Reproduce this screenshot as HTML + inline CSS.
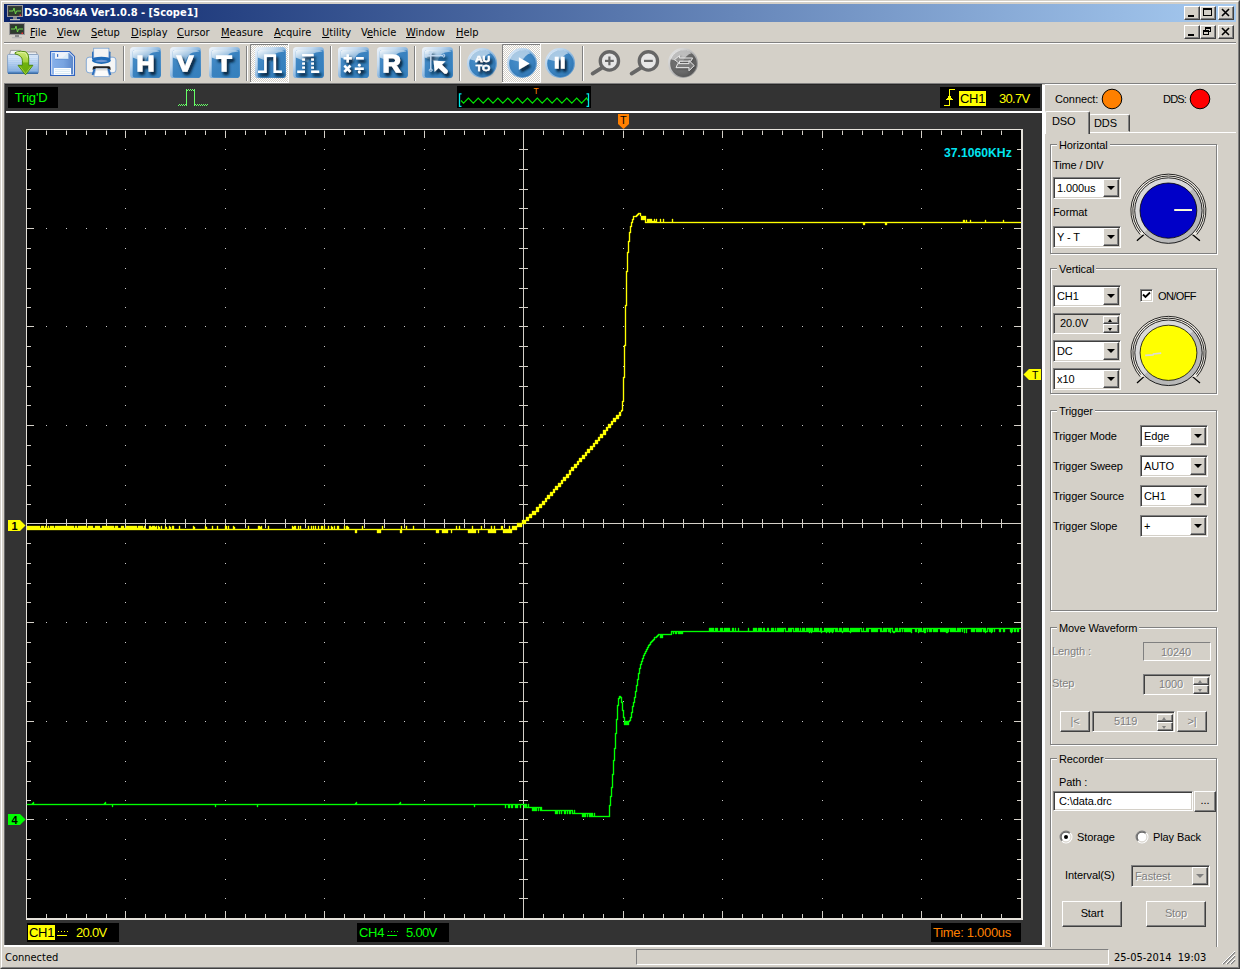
<!DOCTYPE html>
<html lang="en"><head><meta charset="utf-8"><title>DSO-3064A Ver1.0.8 - [Scope1]</title>
<style>
*{box-sizing:border-box;margin:0;padding:0}
html,body{width:1240px;height:969px;overflow:hidden;background:#d4d0c8}
body{position:relative;font-family:"Liberation Sans",sans-serif;font-size:11px;color:#000;line-height:1}
.a{position:absolute}
.t{position:absolute;white-space:nowrap;font-size:11px;line-height:14px;letter-spacing:-0.1px}
.tm{position:absolute;white-space:nowrap;font-family:"DejaVu Sans Condensed","DejaVu Sans","Liberation Sans",sans-serif;font-size:11px;line-height:14px}
.tm u{text-decoration:underline;text-underline-offset:1px}
.dis{color:#808080;text-shadow:1px 1px 0 #fff}
.btn{position:absolute;background:#d4d0c8;border:1px solid;border-color:#fff #404040 #404040 #fff;box-shadow:inset -1px -1px 0 #808080,inset 1px 1px 0 #d4d0c8}
.btn span{position:absolute;left:0;right:0;text-align:center;font-size:11px;letter-spacing:-0.1px}
.sunk{position:absolute;background:#fff;border:1px solid;border-color:#808080 #fff #fff #808080;box-shadow:inset 1px 1px 0 #404040,inset -1px -1px 0 #d4d0c8}
.sunk.g{background:#d4d0c8}
.cb{position:absolute;top:1px;right:1px;bottom:1px;width:16px;background:#d4d0c8;border:1px solid;border-color:#fff #404040 #404040 #fff;box-shadow:inset -1px -1px 0 #808080}
.cb:after{content:"";position:absolute;left:3px;top:6px;border:4px solid transparent;border-top:4px solid #000;border-bottom:0}
.cb.d:after{border-top-color:#808080}
.sunk span{position:absolute;left:3px;top:2.5px;font-size:11px;line-height:14px;letter-spacing:-0.1px;white-space:nowrap}
.grp{position:absolute;border:1px solid #808080;box-shadow:1px 1px 0 #fff,inset 1px 1px 0 #fff}
.grp>b{position:absolute;left:6px;top:-7px;background:#d4d0c8;padding:0 2px;font-weight:normal;font-size:11px;line-height:14px;letter-spacing:-0.1px;white-space:nowrap}
.sep{position:absolute;top:46px;width:2px;height:35px;border-left:1px solid #808080;border-right:1px solid #fff}
.sp{position:absolute;right:1px;width:16px;background:#d4d0c8;border:1px solid;border-color:#fff #404040 #404040 #fff;box-shadow:inset -1px -1px 0 #808080}
.sp:after{content:"";position:absolute;left:4px;top:2px;border:2.5px solid transparent}
.sp.u:after{border-bottom:3px solid #000;border-top:0}
.sp.dn:after{border-top:3px solid #000;border-bottom:0;top:3px}
.sp.gd:after{border-top-color:#808080;border-bottom-color:#808080}
</style></head>
<body>
<div class="a" style="left:0;top:0;width:1240px;height:969px;border:1px solid;border-color:#d4d0c8 #404040 #404040 #d4d0c8"></div>
<div class="a" style="left:1px;top:1px;width:1238px;height:967px;border:1px solid;border-color:#fff #808080 #808080 #fff"></div>
<div class="a" style="left:4px;top:4px;width:1232px;height:18px;background:linear-gradient(90deg,#0a246a 0%,#a6caf0 100%)"></div>
<svg class="a" style="left:7px;top:5px" width="16" height="16" viewBox="0 0 16 16"><rect x="0.5" y="0.5" width="15" height="11" fill="#3a3a3a" stroke="#9a9a9a"/><rect x="2" y="2" width="12" height="8" fill="#2c3c2c"/><path d="M2 6H6L7 3L8.5 9L9.5 6H14" stroke="#6fd24a" stroke-width="1" fill="none"/><rect x="12.5" y="9.5" width="1.5" height="1.5" fill="#e33"/><rect x="6" y="12" width="4" height="2" fill="#888"/><rect x="3" y="14" width="10" height="1.3" fill="#b8b8b8"/></svg>
<div class="tm" style="left:24px;top:6px;color:#fff;font-weight:bold;font-size:11px">DSO-3064A Ver1.0.8 - [Scope1]</div>
<div class="btn" style="left:1184px;top:6px;width:16px;height:14px"><svg class="a" style="left:-1px;top:-1px" width="14" height="12" viewBox="0 0 14 12"><rect x="4" y="9" width="6" height="2" fill="#000"/></svg></div>
<div class="btn" style="left:1200px;top:6px;width:16px;height:14px"><svg class="a" style="left:-1px;top:-1px" width="14" height="12" viewBox="0 0 14 12"><rect x="3.5" y="2.5" width="8" height="7" fill="none" stroke="#000"/><rect x="3" y="2" width="9" height="2" fill="#000"/></svg></div>
<div class="btn" style="left:1218px;top:6px;width:16px;height:14px"><svg class="a" style="left:-1px;top:-1px" width="14" height="12" viewBox="0 0 14 12"><path d="M4 3L11 10M11 3L4 10" stroke="#000" stroke-width="1.6"/></svg></div>
<div class="btn" style="left:1184px;top:25px;width:16px;height:14px"><svg class="a" style="left:-1px;top:-1px" width="14" height="12" viewBox="0 0 14 12"><rect x="4" y="9" width="6" height="2" fill="#000"/></svg></div>
<div class="btn" style="left:1200px;top:25px;width:16px;height:14px"><svg class="a" style="left:-1px;top:-1px" width="14" height="12" viewBox="0 0 14 12"><rect x="5.5" y="2.5" width="5" height="4" fill="none" stroke="#000"/><rect x="5" y="2" width="6" height="2" fill="#000"/><rect x="3.5" y="5.5" width="5" height="4" fill="#d4d0c8" stroke="#000"/><rect x="3" y="5" width="6" height="2" fill="#000"/></svg></div>
<div class="btn" style="left:1218px;top:25px;width:16px;height:14px"><svg class="a" style="left:-1px;top:-1px" width="14" height="12" viewBox="0 0 14 12"><path d="M4 3L11 10M11 3L4 10" stroke="#000" stroke-width="1.6"/></svg></div>
<svg class="a" style="left:9px;top:23px" width="16" height="16" viewBox="0 0 16 16"><rect x="0.5" y="0.5" width="15" height="11" fill="#3a3a3a" stroke="#9a9a9a"/><rect x="2" y="2" width="12" height="8" fill="#2c3c2c"/><path d="M2 6H6L7 3L8.5 9L9.5 6H14" stroke="#6fd24a" stroke-width="1" fill="none"/><rect x="12.5" y="9.5" width="1.5" height="1.5" fill="#e33"/><rect x="6" y="12" width="4" height="2" fill="#888"/><rect x="3" y="14" width="10" height="1.3" fill="#b8b8b8"/></svg>
<div class="tm" style="left:30px;top:26px"><u>F</u>ile</div>
<div class="tm" style="left:57px;top:26px"><u>V</u>iew</div>
<div class="tm" style="left:91px;top:26px"><u>S</u>etup</div>
<div class="tm" style="left:131px;top:26px"><u>D</u>isplay</div>
<div class="tm" style="left:177px;top:26px"><u>C</u>ursor</div>
<div class="tm" style="left:221px;top:26px"><u>M</u>easure</div>
<div class="tm" style="left:274px;top:26px"><u>A</u>cquire</div>
<div class="tm" style="left:322px;top:26px"><u>U</u>tility</div>
<div class="tm" style="left:361px;top:26px">V<u>e</u>hicle</div>
<div class="tm" style="left:406px;top:26px"><u>W</u>indow</div>
<div class="tm" style="left:456px;top:26px"><u>H</u>elp</div>
<div class="a" style="left:4px;top:42px;width:1232px;height:2px;border-top:1px solid #808080;border-bottom:1px solid #fff"></div>
<svg class="a" style="left:0;top:0" width="1240" height="969" viewBox="0 0 1240 969">
<g shape-rendering="crispEdges">
<rect x="4" y="84" width="1038" height="861" fill="#333"/>
<rect x="4" y="84" width="1038" height="1" fill="#262626"/><rect x="4" y="84" width="1" height="861" fill="#6a6a6a"/>
<rect x="6" y="111" width="1036" height="2" fill="#fff"/>
<rect x="1042" y="85" width="3" height="861" fill="#fff"/>
<rect x="4" y="945" width="1041" height="2" fill="#fff"/>
<rect x="8" y="87" width="50" height="21" fill="#000"/>
<rect x="457" y="86" width="134" height="22" fill="#000"/>
<rect x="940" y="87" width="100" height="21" fill="#000"/>
<rect x="26" y="129" width="997" height="791" fill="#e4e1da"/>
<rect x="27" y="130" width="994" height="788" fill="#000"/>
<path d="M46 131h1v4h-1zM46 914h1v4h-1zM46 519h1v9h-1zM66 131h1v4h-1zM66 914h1v4h-1zM66 519h1v9h-1zM86 131h1v4h-1zM86 914h1v4h-1zM86 519h1v9h-1zM106 131h1v4h-1zM106 914h1v4h-1zM106 519h1v9h-1zM125 131h1v7h-1zM125 911h1v7h-1zM125 519h1v9h-1zM145 131h1v4h-1zM145 914h1v4h-1zM145 519h1v9h-1zM165 131h1v4h-1zM165 914h1v4h-1zM165 519h1v9h-1zM185 131h1v4h-1zM185 914h1v4h-1zM185 519h1v9h-1zM205 131h1v4h-1zM205 914h1v4h-1zM205 519h1v9h-1zM225 131h1v7h-1zM225 911h1v7h-1zM225 519h1v9h-1zM245 131h1v4h-1zM245 914h1v4h-1zM245 519h1v9h-1zM265 131h1v4h-1zM265 914h1v4h-1zM265 519h1v9h-1zM285 131h1v4h-1zM285 914h1v4h-1zM285 519h1v9h-1zM305 131h1v4h-1zM305 914h1v4h-1zM305 519h1v9h-1zM324 131h1v7h-1zM324 911h1v7h-1zM324 519h1v9h-1zM344 131h1v4h-1zM344 914h1v4h-1zM344 519h1v9h-1zM364 131h1v4h-1zM364 914h1v4h-1zM364 519h1v9h-1zM384 131h1v4h-1zM384 914h1v4h-1zM384 519h1v9h-1zM404 131h1v4h-1zM404 914h1v4h-1zM404 519h1v9h-1zM424 131h1v7h-1zM424 911h1v7h-1zM424 519h1v9h-1zM444 131h1v4h-1zM444 914h1v4h-1zM444 519h1v9h-1zM464 131h1v4h-1zM464 914h1v4h-1zM464 519h1v9h-1zM484 131h1v4h-1zM484 914h1v4h-1zM484 519h1v9h-1zM504 131h1v4h-1zM504 914h1v4h-1zM504 519h1v9h-1zM523 131h1v7h-1zM523 911h1v7h-1zM543 131h1v4h-1zM543 914h1v4h-1zM543 519h1v9h-1zM563 131h1v4h-1zM563 914h1v4h-1zM563 519h1v9h-1zM583 131h1v4h-1zM583 914h1v4h-1zM583 519h1v9h-1zM603 131h1v4h-1zM603 914h1v4h-1zM603 519h1v9h-1zM623 131h1v7h-1zM623 911h1v7h-1zM623 519h1v9h-1zM643 131h1v4h-1zM643 914h1v4h-1zM643 519h1v9h-1zM663 131h1v4h-1zM663 914h1v4h-1zM663 519h1v9h-1zM683 131h1v4h-1zM683 914h1v4h-1zM683 519h1v9h-1zM703 131h1v4h-1zM703 914h1v4h-1zM703 519h1v9h-1zM722 131h1v7h-1zM722 911h1v7h-1zM722 519h1v9h-1zM742 131h1v4h-1zM742 914h1v4h-1zM742 519h1v9h-1zM762 131h1v4h-1zM762 914h1v4h-1zM762 519h1v9h-1zM782 131h1v4h-1zM782 914h1v4h-1zM782 519h1v9h-1zM802 131h1v4h-1zM802 914h1v4h-1zM802 519h1v9h-1zM822 131h1v7h-1zM822 911h1v7h-1zM822 519h1v9h-1zM842 131h1v4h-1zM842 914h1v4h-1zM842 519h1v9h-1zM862 131h1v4h-1zM862 914h1v4h-1zM862 519h1v9h-1zM882 131h1v4h-1zM882 914h1v4h-1zM882 519h1v9h-1zM902 131h1v4h-1zM902 914h1v4h-1zM902 519h1v9h-1zM921 131h1v7h-1zM921 911h1v7h-1zM921 519h1v9h-1zM941 131h1v4h-1zM941 914h1v4h-1zM941 519h1v9h-1zM961 131h1v4h-1zM961 914h1v4h-1zM961 519h1v9h-1zM981 131h1v4h-1zM981 914h1v4h-1zM981 519h1v9h-1zM1001 131h1v4h-1zM1001 914h1v4h-1zM1001 519h1v9h-1zM27 149h4v1h-4zM1017 149h4v1h-4zM519 149h9v1h-9zM27 169h4v1h-4zM1017 169h4v1h-4zM519 169h9v1h-9zM27 189h4v1h-4zM1017 189h4v1h-4zM519 189h9v1h-9zM27 208h4v1h-4zM1017 208h4v1h-4zM519 208h9v1h-9zM27 228h7v1h-7zM1014 228h7v1h-7zM519 228h9v1h-9zM27 248h4v1h-4zM1017 248h4v1h-4zM519 248h9v1h-9zM27 268h4v1h-4zM1017 268h4v1h-4zM519 268h9v1h-9zM27 288h4v1h-4zM1017 288h4v1h-4zM519 288h9v1h-9zM27 307h4v1h-4zM1017 307h4v1h-4zM519 307h9v1h-9zM27 326h7v1h-7zM1014 326h7v1h-7zM519 326h9v1h-9zM27 346h4v1h-4zM1017 346h4v1h-4zM519 346h9v1h-9zM27 366h4v1h-4zM1017 366h4v1h-4zM519 366h9v1h-9zM27 386h4v1h-4zM1017 386h4v1h-4zM519 386h9v1h-9zM27 405h4v1h-4zM1017 405h4v1h-4zM519 405h9v1h-9zM27 425h7v1h-7zM1014 425h7v1h-7zM519 425h9v1h-9zM27 445h4v1h-4zM1017 445h4v1h-4zM519 445h9v1h-9zM27 465h4v1h-4zM1017 465h4v1h-4zM519 465h9v1h-9zM27 485h4v1h-4zM1017 485h4v1h-4zM519 485h9v1h-9zM27 504h4v1h-4zM1017 504h4v1h-4zM519 504h9v1h-9zM27 523h7v1h-7zM1014 523h7v1h-7zM27 543h4v1h-4zM1017 543h4v1h-4zM519 543h9v1h-9zM27 563h4v1h-4zM1017 563h4v1h-4zM519 563h9v1h-9zM27 583h4v1h-4zM1017 583h4v1h-4zM519 583h9v1h-9zM27 602h4v1h-4zM1017 602h4v1h-4zM519 602h9v1h-9zM27 622h7v1h-7zM1014 622h7v1h-7zM519 622h9v1h-9zM27 642h4v1h-4zM1017 642h4v1h-4zM519 642h9v1h-9zM27 662h4v1h-4zM1017 662h4v1h-4zM519 662h9v1h-9zM27 682h4v1h-4zM1017 682h4v1h-4zM519 682h9v1h-9zM27 701h4v1h-4zM1017 701h4v1h-4zM519 701h9v1h-9zM27 721h7v1h-7zM1014 721h7v1h-7zM519 721h9v1h-9zM27 741h4v1h-4zM1017 741h4v1h-4zM519 741h9v1h-9zM27 761h4v1h-4zM1017 761h4v1h-4zM519 761h9v1h-9zM27 781h4v1h-4zM1017 781h4v1h-4zM519 781h9v1h-9zM27 800h4v1h-4zM1017 800h4v1h-4zM519 800h9v1h-9zM27 819h7v1h-7zM1014 819h7v1h-7zM519 819h9v1h-9zM27 839h4v1h-4zM1017 839h4v1h-4zM519 839h9v1h-9zM27 859h4v1h-4zM1017 859h4v1h-4zM519 859h9v1h-9zM27 879h4v1h-4zM1017 879h4v1h-4zM519 879h9v1h-9zM27 898h4v1h-4zM1017 898h4v1h-4zM519 898h9v1h-9zM523 130h1v788h-1zM27 523h994v1h-994z" fill="#d4d0c8"/>
<path d="M46 130h1v1h-1zM66 130h1v1h-1zM86 130h1v1h-1zM106 130h1v1h-1zM125 130h1v1h-1zM145 130h1v1h-1zM165 130h1v1h-1zM185 130h1v1h-1zM205 130h1v1h-1zM225 130h1v1h-1zM245 130h1v1h-1zM265 130h1v1h-1zM285 130h1v1h-1zM305 130h1v1h-1zM324 130h1v1h-1zM344 130h1v1h-1zM364 130h1v1h-1zM384 130h1v1h-1zM404 130h1v1h-1zM424 130h1v1h-1zM444 130h1v1h-1zM464 130h1v1h-1zM484 130h1v1h-1zM504 130h1v1h-1zM523 130h1v1h-1zM543 130h1v1h-1zM563 130h1v1h-1zM583 130h1v1h-1zM603 130h1v1h-1zM623 130h1v1h-1zM643 130h1v1h-1zM663 130h1v1h-1zM683 130h1v1h-1zM703 130h1v1h-1zM722 130h1v1h-1zM742 130h1v1h-1zM762 130h1v1h-1zM782 130h1v1h-1zM802 130h1v1h-1zM822 130h1v1h-1zM842 130h1v1h-1zM862 130h1v1h-1zM882 130h1v1h-1zM902 130h1v1h-1zM921 130h1v1h-1zM941 130h1v1h-1zM961 130h1v1h-1zM981 130h1v1h-1zM1001 130h1v1h-1z" fill="#d4d0c8" fill-opacity="0.4"/>
<path d="M125 149h1v1h-1zM125 169h1v1h-1zM125 189h1v1h-1zM125 208h1v1h-1zM125 228h1v1h-1zM125 248h1v1h-1zM125 268h1v1h-1zM125 288h1v1h-1zM125 307h1v1h-1zM125 326h1v1h-1zM125 346h1v1h-1zM125 366h1v1h-1zM125 386h1v1h-1zM125 405h1v1h-1zM125 425h1v1h-1zM125 445h1v1h-1zM125 465h1v1h-1zM125 485h1v1h-1zM125 504h1v1h-1zM125 523h1v1h-1zM125 543h1v1h-1zM125 563h1v1h-1zM125 583h1v1h-1zM125 602h1v1h-1zM125 622h1v1h-1zM125 642h1v1h-1zM125 662h1v1h-1zM125 682h1v1h-1zM125 701h1v1h-1zM125 721h1v1h-1zM125 741h1v1h-1zM125 761h1v1h-1zM125 781h1v1h-1zM125 800h1v1h-1zM125 819h1v1h-1zM125 839h1v1h-1zM125 859h1v1h-1zM125 879h1v1h-1zM125 898h1v1h-1zM225 149h1v1h-1zM225 169h1v1h-1zM225 189h1v1h-1zM225 208h1v1h-1zM225 228h1v1h-1zM225 248h1v1h-1zM225 268h1v1h-1zM225 288h1v1h-1zM225 307h1v1h-1zM225 326h1v1h-1zM225 346h1v1h-1zM225 366h1v1h-1zM225 386h1v1h-1zM225 405h1v1h-1zM225 425h1v1h-1zM225 445h1v1h-1zM225 465h1v1h-1zM225 485h1v1h-1zM225 504h1v1h-1zM225 523h1v1h-1zM225 543h1v1h-1zM225 563h1v1h-1zM225 583h1v1h-1zM225 602h1v1h-1zM225 622h1v1h-1zM225 642h1v1h-1zM225 662h1v1h-1zM225 682h1v1h-1zM225 701h1v1h-1zM225 721h1v1h-1zM225 741h1v1h-1zM225 761h1v1h-1zM225 781h1v1h-1zM225 800h1v1h-1zM225 819h1v1h-1zM225 839h1v1h-1zM225 859h1v1h-1zM225 879h1v1h-1zM225 898h1v1h-1zM324 149h1v1h-1zM324 169h1v1h-1zM324 189h1v1h-1zM324 208h1v1h-1zM324 228h1v1h-1zM324 248h1v1h-1zM324 268h1v1h-1zM324 288h1v1h-1zM324 307h1v1h-1zM324 326h1v1h-1zM324 346h1v1h-1zM324 366h1v1h-1zM324 386h1v1h-1zM324 405h1v1h-1zM324 425h1v1h-1zM324 445h1v1h-1zM324 465h1v1h-1zM324 485h1v1h-1zM324 504h1v1h-1zM324 523h1v1h-1zM324 543h1v1h-1zM324 563h1v1h-1zM324 583h1v1h-1zM324 602h1v1h-1zM324 622h1v1h-1zM324 642h1v1h-1zM324 662h1v1h-1zM324 682h1v1h-1zM324 701h1v1h-1zM324 721h1v1h-1zM324 741h1v1h-1zM324 761h1v1h-1zM324 781h1v1h-1zM324 800h1v1h-1zM324 819h1v1h-1zM324 839h1v1h-1zM324 859h1v1h-1zM324 879h1v1h-1zM324 898h1v1h-1zM424 149h1v1h-1zM424 169h1v1h-1zM424 189h1v1h-1zM424 208h1v1h-1zM424 228h1v1h-1zM424 248h1v1h-1zM424 268h1v1h-1zM424 288h1v1h-1zM424 307h1v1h-1zM424 326h1v1h-1zM424 346h1v1h-1zM424 366h1v1h-1zM424 386h1v1h-1zM424 405h1v1h-1zM424 425h1v1h-1zM424 445h1v1h-1zM424 465h1v1h-1zM424 485h1v1h-1zM424 504h1v1h-1zM424 523h1v1h-1zM424 543h1v1h-1zM424 563h1v1h-1zM424 583h1v1h-1zM424 602h1v1h-1zM424 622h1v1h-1zM424 642h1v1h-1zM424 662h1v1h-1zM424 682h1v1h-1zM424 701h1v1h-1zM424 721h1v1h-1zM424 741h1v1h-1zM424 761h1v1h-1zM424 781h1v1h-1zM424 800h1v1h-1zM424 819h1v1h-1zM424 839h1v1h-1zM424 859h1v1h-1zM424 879h1v1h-1zM424 898h1v1h-1zM623 149h1v1h-1zM623 169h1v1h-1zM623 189h1v1h-1zM623 208h1v1h-1zM623 228h1v1h-1zM623 248h1v1h-1zM623 268h1v1h-1zM623 288h1v1h-1zM623 307h1v1h-1zM623 326h1v1h-1zM623 346h1v1h-1zM623 366h1v1h-1zM623 386h1v1h-1zM623 405h1v1h-1zM623 425h1v1h-1zM623 445h1v1h-1zM623 465h1v1h-1zM623 485h1v1h-1zM623 504h1v1h-1zM623 523h1v1h-1zM623 543h1v1h-1zM623 563h1v1h-1zM623 583h1v1h-1zM623 602h1v1h-1zM623 622h1v1h-1zM623 642h1v1h-1zM623 662h1v1h-1zM623 682h1v1h-1zM623 701h1v1h-1zM623 721h1v1h-1zM623 741h1v1h-1zM623 761h1v1h-1zM623 781h1v1h-1zM623 800h1v1h-1zM623 819h1v1h-1zM623 839h1v1h-1zM623 859h1v1h-1zM623 879h1v1h-1zM623 898h1v1h-1zM722 149h1v1h-1zM722 169h1v1h-1zM722 189h1v1h-1zM722 208h1v1h-1zM722 228h1v1h-1zM722 248h1v1h-1zM722 268h1v1h-1zM722 288h1v1h-1zM722 307h1v1h-1zM722 326h1v1h-1zM722 346h1v1h-1zM722 366h1v1h-1zM722 386h1v1h-1zM722 405h1v1h-1zM722 425h1v1h-1zM722 445h1v1h-1zM722 465h1v1h-1zM722 485h1v1h-1zM722 504h1v1h-1zM722 523h1v1h-1zM722 543h1v1h-1zM722 563h1v1h-1zM722 583h1v1h-1zM722 602h1v1h-1zM722 622h1v1h-1zM722 642h1v1h-1zM722 662h1v1h-1zM722 682h1v1h-1zM722 701h1v1h-1zM722 721h1v1h-1zM722 741h1v1h-1zM722 761h1v1h-1zM722 781h1v1h-1zM722 800h1v1h-1zM722 819h1v1h-1zM722 839h1v1h-1zM722 859h1v1h-1zM722 879h1v1h-1zM722 898h1v1h-1zM822 149h1v1h-1zM822 169h1v1h-1zM822 189h1v1h-1zM822 208h1v1h-1zM822 228h1v1h-1zM822 248h1v1h-1zM822 268h1v1h-1zM822 288h1v1h-1zM822 307h1v1h-1zM822 326h1v1h-1zM822 346h1v1h-1zM822 366h1v1h-1zM822 386h1v1h-1zM822 405h1v1h-1zM822 425h1v1h-1zM822 445h1v1h-1zM822 465h1v1h-1zM822 485h1v1h-1zM822 504h1v1h-1zM822 523h1v1h-1zM822 543h1v1h-1zM822 563h1v1h-1zM822 583h1v1h-1zM822 602h1v1h-1zM822 622h1v1h-1zM822 642h1v1h-1zM822 662h1v1h-1zM822 682h1v1h-1zM822 701h1v1h-1zM822 721h1v1h-1zM822 741h1v1h-1zM822 761h1v1h-1zM822 781h1v1h-1zM822 800h1v1h-1zM822 819h1v1h-1zM822 839h1v1h-1zM822 859h1v1h-1zM822 879h1v1h-1zM822 898h1v1h-1zM921 149h1v1h-1zM921 169h1v1h-1zM921 189h1v1h-1zM921 208h1v1h-1zM921 228h1v1h-1zM921 248h1v1h-1zM921 268h1v1h-1zM921 288h1v1h-1zM921 307h1v1h-1zM921 326h1v1h-1zM921 346h1v1h-1zM921 366h1v1h-1zM921 386h1v1h-1zM921 405h1v1h-1zM921 425h1v1h-1zM921 445h1v1h-1zM921 465h1v1h-1zM921 485h1v1h-1zM921 504h1v1h-1zM921 523h1v1h-1zM921 543h1v1h-1zM921 563h1v1h-1zM921 583h1v1h-1zM921 602h1v1h-1zM921 622h1v1h-1zM921 642h1v1h-1zM921 662h1v1h-1zM921 682h1v1h-1zM921 701h1v1h-1zM921 721h1v1h-1zM921 741h1v1h-1zM921 761h1v1h-1zM921 781h1v1h-1zM921 800h1v1h-1zM921 819h1v1h-1zM921 839h1v1h-1zM921 859h1v1h-1zM921 879h1v1h-1zM921 898h1v1h-1zM46 228h1v1h-1zM66 228h1v1h-1zM86 228h1v1h-1zM106 228h1v1h-1zM145 228h1v1h-1zM165 228h1v1h-1zM185 228h1v1h-1zM205 228h1v1h-1zM245 228h1v1h-1zM265 228h1v1h-1zM285 228h1v1h-1zM305 228h1v1h-1zM344 228h1v1h-1zM364 228h1v1h-1zM384 228h1v1h-1zM404 228h1v1h-1zM444 228h1v1h-1zM464 228h1v1h-1zM484 228h1v1h-1zM504 228h1v1h-1zM543 228h1v1h-1zM563 228h1v1h-1zM583 228h1v1h-1zM603 228h1v1h-1zM643 228h1v1h-1zM663 228h1v1h-1zM683 228h1v1h-1zM703 228h1v1h-1zM742 228h1v1h-1zM762 228h1v1h-1zM782 228h1v1h-1zM802 228h1v1h-1zM842 228h1v1h-1zM862 228h1v1h-1zM882 228h1v1h-1zM902 228h1v1h-1zM941 228h1v1h-1zM961 228h1v1h-1zM981 228h1v1h-1zM1001 228h1v1h-1zM46 326h1v1h-1zM66 326h1v1h-1zM86 326h1v1h-1zM106 326h1v1h-1zM145 326h1v1h-1zM165 326h1v1h-1zM185 326h1v1h-1zM205 326h1v1h-1zM245 326h1v1h-1zM265 326h1v1h-1zM285 326h1v1h-1zM305 326h1v1h-1zM344 326h1v1h-1zM364 326h1v1h-1zM384 326h1v1h-1zM404 326h1v1h-1zM444 326h1v1h-1zM464 326h1v1h-1zM484 326h1v1h-1zM504 326h1v1h-1zM543 326h1v1h-1zM563 326h1v1h-1zM583 326h1v1h-1zM603 326h1v1h-1zM643 326h1v1h-1zM663 326h1v1h-1zM683 326h1v1h-1zM703 326h1v1h-1zM742 326h1v1h-1zM762 326h1v1h-1zM782 326h1v1h-1zM802 326h1v1h-1zM842 326h1v1h-1zM862 326h1v1h-1zM882 326h1v1h-1zM902 326h1v1h-1zM941 326h1v1h-1zM961 326h1v1h-1zM981 326h1v1h-1zM1001 326h1v1h-1zM46 425h1v1h-1zM66 425h1v1h-1zM86 425h1v1h-1zM106 425h1v1h-1zM145 425h1v1h-1zM165 425h1v1h-1zM185 425h1v1h-1zM205 425h1v1h-1zM245 425h1v1h-1zM265 425h1v1h-1zM285 425h1v1h-1zM305 425h1v1h-1zM344 425h1v1h-1zM364 425h1v1h-1zM384 425h1v1h-1zM404 425h1v1h-1zM444 425h1v1h-1zM464 425h1v1h-1zM484 425h1v1h-1zM504 425h1v1h-1zM543 425h1v1h-1zM563 425h1v1h-1zM583 425h1v1h-1zM603 425h1v1h-1zM643 425h1v1h-1zM663 425h1v1h-1zM683 425h1v1h-1zM703 425h1v1h-1zM742 425h1v1h-1zM762 425h1v1h-1zM782 425h1v1h-1zM802 425h1v1h-1zM842 425h1v1h-1zM862 425h1v1h-1zM882 425h1v1h-1zM902 425h1v1h-1zM941 425h1v1h-1zM961 425h1v1h-1zM981 425h1v1h-1zM1001 425h1v1h-1zM46 622h1v1h-1zM66 622h1v1h-1zM86 622h1v1h-1zM106 622h1v1h-1zM145 622h1v1h-1zM165 622h1v1h-1zM185 622h1v1h-1zM205 622h1v1h-1zM245 622h1v1h-1zM265 622h1v1h-1zM285 622h1v1h-1zM305 622h1v1h-1zM344 622h1v1h-1zM364 622h1v1h-1zM384 622h1v1h-1zM404 622h1v1h-1zM444 622h1v1h-1zM464 622h1v1h-1zM484 622h1v1h-1zM504 622h1v1h-1zM543 622h1v1h-1zM563 622h1v1h-1zM583 622h1v1h-1zM603 622h1v1h-1zM643 622h1v1h-1zM663 622h1v1h-1zM683 622h1v1h-1zM703 622h1v1h-1zM742 622h1v1h-1zM762 622h1v1h-1zM782 622h1v1h-1zM802 622h1v1h-1zM842 622h1v1h-1zM862 622h1v1h-1zM882 622h1v1h-1zM902 622h1v1h-1zM941 622h1v1h-1zM961 622h1v1h-1zM981 622h1v1h-1zM1001 622h1v1h-1zM46 721h1v1h-1zM66 721h1v1h-1zM86 721h1v1h-1zM106 721h1v1h-1zM145 721h1v1h-1zM165 721h1v1h-1zM185 721h1v1h-1zM205 721h1v1h-1zM245 721h1v1h-1zM265 721h1v1h-1zM285 721h1v1h-1zM305 721h1v1h-1zM344 721h1v1h-1zM364 721h1v1h-1zM384 721h1v1h-1zM404 721h1v1h-1zM444 721h1v1h-1zM464 721h1v1h-1zM484 721h1v1h-1zM504 721h1v1h-1zM543 721h1v1h-1zM563 721h1v1h-1zM583 721h1v1h-1zM603 721h1v1h-1zM643 721h1v1h-1zM663 721h1v1h-1zM683 721h1v1h-1zM703 721h1v1h-1zM742 721h1v1h-1zM762 721h1v1h-1zM782 721h1v1h-1zM802 721h1v1h-1zM842 721h1v1h-1zM862 721h1v1h-1zM882 721h1v1h-1zM902 721h1v1h-1zM941 721h1v1h-1zM961 721h1v1h-1zM981 721h1v1h-1zM1001 721h1v1h-1zM46 819h1v1h-1zM66 819h1v1h-1zM86 819h1v1h-1zM106 819h1v1h-1zM145 819h1v1h-1zM165 819h1v1h-1zM185 819h1v1h-1zM205 819h1v1h-1zM245 819h1v1h-1zM265 819h1v1h-1zM285 819h1v1h-1zM305 819h1v1h-1zM344 819h1v1h-1zM364 819h1v1h-1zM384 819h1v1h-1zM404 819h1v1h-1zM444 819h1v1h-1zM464 819h1v1h-1zM484 819h1v1h-1zM504 819h1v1h-1zM543 819h1v1h-1zM563 819h1v1h-1zM583 819h1v1h-1zM603 819h1v1h-1zM643 819h1v1h-1zM663 819h1v1h-1zM683 819h1v1h-1zM703 819h1v1h-1zM742 819h1v1h-1zM762 819h1v1h-1zM782 819h1v1h-1zM802 819h1v1h-1zM842 819h1v1h-1zM862 819h1v1h-1zM882 819h1v1h-1zM902 819h1v1h-1zM941 819h1v1h-1zM961 819h1v1h-1zM981 819h1v1h-1zM1001 819h1v1h-1z" fill="#c8c8c8"/>
</g><path d="M27 526h13v4h-13zM40 528h1v2h-1zM41 526h3v4h-3zM44 528h1v2h-1zM45 526h2v4h-2zM47 528h1v2h-1zM48 526h1v4h-1zM49 528h1v2h-1zM50 526h4v4h-4zM54 528h1v2h-1zM55 526h19v4h-19zM74 528h1v2h-1zM75 526h2v4h-2zM77 528h1v2h-1zM78 526h9v4h-9zM87 528h1v2h-1zM88 526h5v4h-5zM93 528h2v2h-2zM95 526h5v4h-5zM100 528h2v2h-2zM102 526h12v4h-12zM114 528h1v2h-1zM115 526h3v4h-3zM118 528h3v2h-3zM121 526h3v4h-3zM124 528h2v2h-2zM126 526h11v4h-11zM137 528h1v2h-1zM138 526h5v4h-5zM143 528h1v2h-1zM144 526h1v4h-1zM145 528h1v2h-1zM146 529h3v1h-3zM149 526h2v4h-2zM151 527h1v3h-1zM152 526h3v4h-3zM155 527h1v3h-1zM156 526h1v4h-1zM157 529h1v1h-1zM158 526h1v4h-1zM159 527h1v3h-1zM160 529h1v1h-1zM161 526h1v4h-1zM162 529h3v1h-3zM165 526h1v4h-1zM166 527h1v3h-1zM167 529h2v1h-2zM169 526h1v4h-1zM170 527h1v3h-1zM171 529h1v1h-1zM172 526h2v4h-2zM174 529h5v1h-5zM179 526h1v4h-1zM180 529h13v1h-13zM193 526h1v4h-1zM194 527h1v3h-1zM195 529h10v1h-10zM205 526h1v4h-1zM206 527h1v3h-1zM207 529h5v1h-5zM212 526h1v4h-1zM213 529h4v1h-4zM217 526h1v4h-1zM218 529h7v1h-7zM225 526h2v4h-2zM227 529h1v1h-1zM228 526h1v4h-1zM229 529h4v1h-4zM233 526h1v4h-1zM234 527h1v3h-1zM235 529h13v1h-13zM248 526h1v4h-1zM249 529h9v1h-9zM258 526h2v4h-2zM260 527h1v3h-1zM261 526h1v4h-1zM262 529h6v1h-6zM268 526h1v4h-1zM269 529h23v1h-23zM292 526h1v4h-1zM293 527h1v3h-1zM294 526h2v4h-2zM296 529h2v1h-2zM298 526h1v4h-1zM299 529h1v1h-1zM300 526h1v4h-1zM301 529h7v1h-7zM308 526h1v4h-1zM309 529h2v1h-2zM311 526h1v4h-1zM312 529h1v1h-1zM313 526h1v4h-1zM314 529h1v1h-1zM315 526h1v4h-1zM316 529h2v1h-2zM318 526h1v4h-1zM319 529h2v1h-2zM321 526h2v4h-2zM323 529h1v1h-1zM324 526h1v4h-1zM325 529h3v1h-3zM328 526h1v4h-1zM329 529h2v1h-2zM331 526h1v4h-1zM332 527h1v3h-1zM333 529h1v1h-1zM334 526h1v4h-1zM335 529h2v1h-2zM337 526h2v4h-2zM339 529h5v1h-5zM344 526h1v4h-1zM345 529h1v1h-1zM346 526h2v4h-2zM348 527h1v3h-1zM349 529h6v1h-6zM355 529h2v4h-2zM357 529h5v1h-5zM362 526h1v4h-1zM363 529h14v1h-14zM377 529h4v4h-4zM381 529h1v1h-1zM382 526h1v4h-1zM383 529h17v1h-17zM400 529h1v4h-1zM401 526h1v7h-1zM402 529h4v1h-4zM406 526h1v4h-1zM407 529h6v1h-6zM413 526h1v4h-1zM414 529h22v1h-22zM436 529h3v4h-3zM439 529h3v1h-3zM442 529h6v4h-6zM448 529h3v1h-3zM451 529h1v4h-1zM452 529h4v1h-4zM456 526h1v4h-1zM457 529h2v1h-2zM459 526h1v4h-1zM460 529h8v1h-8zM468 529h4v4h-4zM472 526h1v7h-1zM473 529h3v4h-3zM476 529h2v1h-2zM478 529h1v4h-1zM479 529h2v1h-2zM481 526h1v4h-1zM482 529h6v1h-6zM488 529h3v4h-3zM491 526h1v7h-1zM492 529h2v4h-2zM494 526h1v7h-1zM495 529h1v4h-1zM496 529h5v1h-5zM501 526h2v4h-2zM503 529h6v4h-6zM509 526h1v7h-1zM510 529h2v4h-2zM512 526h5v4h-5zM517 523h5v4h-5zM522 520h4v4h-4zM526 517h3v4h-3zM529 514h3v4h-3zM532 511h4v4h-4zM536 507h3v5h-3zM539 504h3v4h-3zM542 501h3v4h-3zM545 498h2v4h-2zM547 495h3v4h-3zM550 492h3v4h-3zM553 489h2v4h-2zM555 486h3v4h-3zM558 483h3v4h-3zM561 480h2v4h-2zM563 477h3v4h-3zM566 474h3v4h-3zM569 470h2v5h-2zM571 467h3v4h-3zM574 464h3v4h-3zM577 461h2v4h-2zM579 458h3v4h-3zM582 455h3v4h-3zM585 452h2v4h-2zM587 449h3v4h-3zM590 446h3v4h-3zM593 443h2v4h-2zM595 440h3v4h-3zM598 437h2v4h-2zM600 434h3v4h-3zM603 430h3v5h-3zM606 427h2v4h-2zM608 424h3v4h-3zM611 421h2v4h-2zM613 418h3v4h-3zM616 415h3v4h-3zM619 412h2v4h-2zM621 410h1v2h-1zM622 401h1v10h-1zM623 377h1v25h-1zM624 345h1v33h-1zM625 305h1v41h-1zM626 271h1v35h-1zM627 252h1v20h-1zM628 241h1v12h-1zM629 232h1v10h-1zM630 226h1v7h-1zM631 222h1v5h-1zM632 219h1v4h-1zM633 216h1v4h-1zM634 216h2v1h-2zM636 215h1v2h-1zM637 214h1v2h-1zM638 213h1v2h-1zM639 213h1v1h-1zM640 213h1v3h-1zM641 216h4v4h-4zM645 216h1v7h-1zM646 222h1v1h-1zM647 219h5v4h-5zM652 221h2v2h-2zM654 219h1v4h-1zM655 221h1v2h-1zM656 219h1v4h-1zM657 222h3v1h-3zM660 219h1v4h-1zM661 222h2v1h-2zM663 219h1v4h-1zM664 222h8v1h-8zM672 219h1v4h-1zM673 222h190v1h-190zM863 222h2v3h-2zM865 222h20v1h-20zM885 222h2v3h-2zM887 222h76v1h-76zM963 220h2v3h-2zM965 222h1v1h-1zM966 220h1v3h-1zM967 222h3v1h-3zM970 220h1v3h-1zM971 222h14v1h-14zM985 220h1v3h-1zM986 222h17v1h-17zM1003 220h1v3h-1zM1004 222h17v1h-17z" fill="#ffff00" stroke="#ffff00" stroke-width="0.35"/>
<path d="M27 804h5v1h-5zM32 803h1v2h-1zM33 802h1v3h-1zM34 804h70v1h-70zM104 803h1v2h-1zM105 802h1v3h-1zM106 804h6v1h-6zM112 804h1v3h-1zM113 804h102v1h-102zM215 804h1v3h-1zM216 804h41v1h-41zM257 804h1v3h-1zM258 804h97v1h-97zM355 803h1v2h-1zM356 802h1v3h-1zM357 804h42v1h-42zM399 803h1v2h-1zM400 802h1v3h-1zM401 804h73v1h-73zM474 804h1v3h-1zM475 804h30v1h-30zM505 804h1v4h-1zM506 804h2v1h-2zM508 804h2v4h-2zM510 804h1v1h-1zM511 804h2v4h-2zM513 804h2v1h-2zM515 804h3v4h-3zM518 804h2v1h-2zM520 804h1v4h-1zM521 804h3v1h-3zM524 804h3v4h-3zM527 807h1v1h-1zM528 804h1v4h-1zM529 807h3v1h-3zM532 807h5v4h-5zM537 807h1v1h-1zM538 807h1v4h-1zM539 807h1v1h-1zM540 807h2v4h-2zM542 810h13v1h-13zM555 810h3v4h-3zM558 810h1v1h-1zM559 810h1v4h-1zM560 810h1v1h-1zM561 810h1v4h-1zM562 810h2v1h-2zM564 810h2v4h-2zM566 810h1v1h-1zM567 810h1v4h-1zM568 810h1v1h-1zM569 810h2v4h-2zM571 810h1v1h-1zM572 810h1v4h-1zM573 813h1v1h-1zM574 810h1v4h-1zM575 813h7v1h-7zM582 813h4v4h-4zM586 813h1v1h-1zM587 813h1v4h-1zM588 813h1v1h-1zM589 813h4v4h-4zM593 816h1v1h-1zM594 813h1v4h-1zM595 816h14v1h-14zM609 805h1v12h-1zM610 796h1v10h-1zM611 787h1v10h-1zM612 774h1v14h-1zM613 760h1v15h-1zM614 748h1v13h-1zM615 733h1v16h-1zM616 719h1v15h-1zM617 705h1v15h-1zM618 698h1v8h-1zM619 696h1v3h-1zM620 696h1v2h-1zM621 697h1v6h-1zM622 702h1v9h-1zM623 710h1v8h-1zM624 717h1v8h-1zM625 721h4v4h-4zM629 720h1v2h-1zM630 717h1v4h-1zM631 712h1v6h-1zM632 706h1v7h-1zM633 702h1v5h-1zM634 697h1v6h-1zM635 691h1v7h-1zM636 685h1v7h-1zM637 679h1v7h-1zM638 673h1v7h-1zM639 668h1v6h-1zM640 664h1v5h-1zM641 661h1v4h-1zM642 658h1v4h-1zM643 655h1v4h-1zM644 653h1v3h-1zM645 651h1v3h-1zM646 649h1v3h-1zM647 647h1v3h-1zM648 645h1v3h-1zM649 644h1v2h-1zM650 642h1v3h-1zM651 641h1v2h-1zM652 640h1v2h-1zM653 639h1v2h-1zM654 637h1v3h-1zM655 637h1v1h-1zM656 636h1v2h-1zM657 635h1v2h-1zM658 634h1v2h-1zM659 634h1v1h-1zM660 634h3v4h-3zM663 634h8v1h-8zM671 631h1v4h-1zM672 631h1v1h-1zM673 631h1v3h-1zM674 631h1v1h-1zM675 631h2v3h-2zM677 631h1v1h-1zM678 631h5v3h-5zM683 631h26v1h-26zM709 628h5v4h-5zM714 631h1v1h-1zM715 628h3v4h-3zM718 631h2v1h-2zM720 628h3v4h-3zM723 631h1v1h-1zM724 628h6v4h-6zM730 631h2v1h-2zM732 628h2v4h-2zM734 631h1v1h-1zM735 628h1v4h-1zM736 631h2v1h-2zM738 628h1v4h-1zM739 631h9v1h-9zM748 628h1v4h-1zM749 631h4v1h-4zM753 628h4v4h-4zM757 631h1v1h-1zM758 628h4v4h-4zM762 631h1v1h-1zM763 628h2v4h-2zM765 631h2v1h-2zM767 628h2v4h-2zM769 631h2v1h-2zM771 628h3v4h-3zM774 631h1v1h-1zM775 628h1v4h-1zM776 631h1v1h-1zM777 628h7v4h-7zM784 628h1v1h-1zM785 628h1v4h-1zM786 631h2v1h-2zM788 628h4v4h-4zM792 628h1v1h-1zM793 628h1v4h-1zM794 631h1v1h-1zM795 628h4v4h-4zM799 631h1v1h-1zM800 628h1v4h-1zM801 631h1v1h-1zM802 628h3v4h-3zM805 631h1v1h-1zM806 628h3v4h-3zM809 628h1v5h-1zM810 628h1v4h-1zM811 628h1v5h-1zM812 628h1v4h-1zM813 631h1v1h-1zM814 628h5v4h-5zM819 631h1v1h-1zM820 628h1v4h-1zM821 628h1v5h-1zM822 631h2v1h-2zM824 628h2v4h-2zM826 628h1v5h-1zM827 628h2v4h-2zM829 628h1v5h-1zM830 628h2v4h-2zM832 628h1v5h-1zM833 628h1v4h-1zM834 628h1v1h-1zM835 628h3v4h-3zM838 631h1v1h-1zM839 628h3v4h-3zM842 631h1v2h-1zM843 628h6v4h-6zM849 631h1v1h-1zM850 628h1v5h-1zM851 628h9v4h-9zM860 628h1v1h-1zM861 628h1v4h-1zM862 631h1v1h-1zM863 628h1v4h-1zM864 631h2v1h-2zM866 628h3v4h-3zM869 628h2v1h-2zM871 628h7v4h-7zM878 628h2v1h-2zM880 628h2v4h-2zM882 631h1v1h-1zM883 628h4v4h-4zM887 628h1v1h-1zM888 628h2v4h-2zM890 628h1v5h-1zM891 628h1v1h-1zM892 628h1v4h-1zM893 631h2v2h-2zM895 628h3v4h-3zM898 631h1v1h-1zM899 628h2v4h-2zM901 628h1v1h-1zM902 628h1v4h-1zM903 628h1v1h-1zM904 628h7v4h-7zM911 628h1v5h-1zM912 628h3v1h-3zM915 628h2v4h-2zM917 628h1v1h-1zM918 628h1v5h-1zM919 628h3v4h-3zM922 631h1v1h-1zM923 628h1v4h-1zM924 628h2v5h-2zM926 628h1v1h-1zM927 628h1v4h-1zM928 628h1v1h-1zM929 628h3v4h-3zM932 628h1v1h-1zM933 628h5v4h-5zM938 628h2v1h-2zM940 628h6v4h-6zM946 628h2v5h-2zM948 628h1v4h-1zM949 628h1v1h-1zM950 628h6v4h-6zM956 631h1v1h-1zM957 628h4v4h-4zM961 628h1v1h-1zM962 628h1v4h-1zM963 628h1v1h-1zM964 628h1v5h-1zM965 628h1v1h-1zM966 628h1v5h-1zM967 628h4v1h-4zM971 628h4v4h-4zM975 628h1v1h-1zM976 628h6v4h-6zM982 628h1v1h-1zM983 628h2v4h-2zM985 628h1v5h-1zM986 631h1v1h-1zM987 628h1v4h-1zM988 628h1v1h-1zM989 628h2v4h-2zM991 628h1v5h-1zM992 628h1v4h-1zM993 628h1v1h-1zM994 628h1v4h-1zM995 628h4v1h-4zM999 628h2v4h-2zM1001 628h2v1h-2zM1003 628h2v4h-2zM1005 628h5v1h-5zM1010 628h1v4h-1zM1011 628h1v5h-1zM1012 628h1v4h-1zM1013 628h1v1h-1zM1014 628h2v4h-2zM1016 628h1v1h-1zM1017 628h2v4h-2zM1019 628h2v1h-2z" fill="#00ff00" stroke="#00ff00" stroke-width="0.35"/><g shape-rendering="crispEdges">
<rect x="27" y="923" width="92" height="19" fill="#000"/><rect x="28" y="925" width="27" height="15" fill="#ffff00"/>
<rect x="357" y="923" width="92" height="19" fill="#000"/>
<rect x="931" y="923" width="90" height="19" fill="#000"/>
<rect x="959" y="91" width="27" height="15" fill="#ffff00"/>
<path d="M58 931h1M61 931h1M64 931h1M67 931h1M57 935h10" stroke="#ffff00" stroke-width="1" fill="none" transform="translate(0 0.5)"/>
<path d="M388 931h1M391 931h1M394 931h1M397 931h1M387 935h10" stroke="#00ff00" stroke-width="1" fill="none" transform="translate(0 0.5)"/>
<path d="M944 105.5h5.5v-16h5" stroke="#ffff00" stroke-width="1" fill="none"/><path d="M946 100h7l-3.5 -5z" fill="#ffff00"/>
<path d="M178 105h1v1h-1zM179 104h1v1h-1zM180 105h1v1h-1zM181 104h1v1h-1zM182 105h1v1h-1zM183 104h1v1h-1zM184 105h1v1h-1zM185 104h1v1h-1zM186 89h1v17h-1zM194 89h1v17h-1zM187 90h1v1h-1zM188 89h1v1h-1zM189 90h1v1h-1zM190 89h1v1h-1zM191 90h1v1h-1zM192 89h1v1h-1zM193 90h1v1h-1zM195 104h1v1h-1zM196 105h1v1h-1zM197 104h1v1h-1zM198 105h1v1h-1zM199 104h1v1h-1zM200 105h1v1h-1zM201 104h1v1h-1zM202 105h1v1h-1zM203 104h1v1h-1zM204 105h1v1h-1zM205 104h1v1h-1zM206 105h1v1h-1zM207 104h1v1h-1z" fill="#66ff66"/>
</g>
<path d="M461.0 100.5 L463.5 103.2 L468.4 98.0 L473.3 103.2 L478.2 98.0 L483.2 103.2 L488.1 98.0 L493.0 103.2 L497.9 98.0 L502.8 103.2 L507.8 98.0 L512.7 103.2 L517.6 98.0 L522.5 103.2 L527.5 98.0 L532.4 103.2 L537.3 98.0 L542.2 103.2 L547.2 98.0 L552.1 103.2 L557.0 98.0 L561.9 103.2 L566.8 98.0 L571.8 103.2 L576.7 98.0 L581.6 103.2 L586.5 98.0 L588.0 100.5" stroke="#00e800" stroke-width="1.15" fill="none"/>
<path d="M461.5 93.8h-2v12.6h2M586.5 93.8h2v12.6h-2" stroke="#00e8e8" stroke-width="1.3" fill="none"/>
<path d="M8 520h12l5.5 5.5l-5.5 5.5h-12z" fill="#ffff00"/>
<path d="M8 814h12l5.5 5.5l-5.5 5.5h-12z" fill="#00ff00"/>
<path d="M1041 369h-12l-5.5 5.5l5.5 5.5h12z" fill="#ffff00"/>
<path d="M618 114h11v10l-5.5 5l-5.5 -5z" fill="#ff8000"/>
<text x="11.5" y="530" font-family="Liberation Sans,sans-serif" font-size="11" font-weight="bold" fill="#000">1</text>
<text x="11.5" y="824" font-family="Liberation Sans,sans-serif" font-size="11" font-weight="bold" fill="#000">4</text>
<text x="1032" y="379" font-family="Liberation Sans,sans-serif" font-size="10.5" fill="#000">T</text>
<text x="620" y="124" font-family="Liberation Sans,sans-serif" font-size="11" fill="#000">T</text>
<text x="533.6" y="94" font-family="Liberation Sans,sans-serif" font-size="8.5" fill="#ff8000">T</text>
<text x="14.8" y="102" font-family="Liberation Sans,sans-serif" font-size="13" fill="#00ff00" letter-spacing="-0.2">Trig'D</text>
<text x="960" y="103" font-family="Liberation Sans,sans-serif" font-size="13" fill="#000" letter-spacing="-0.3">CH1</text>
<text x="999" y="103" font-family="Liberation Sans,sans-serif" font-size="13" fill="#ffff00" letter-spacing="-0.7">30.7V</text>
<text x="944" y="157" font-family="Liberation Sans,sans-serif" font-size="12.2" font-weight="bold" fill="#00e4f0">37.1060KHz</text>
<text x="29" y="937" font-family="Liberation Sans,sans-serif" font-size="13" fill="#000" letter-spacing="-0.3">CH1</text>
<text x="76" y="937" font-family="Liberation Sans,sans-serif" font-size="13" fill="#ffff00" letter-spacing="-0.7">20.0V</text>
<text x="359" y="937" font-family="Liberation Sans,sans-serif" font-size="13" fill="#00ff00" letter-spacing="-0.3">CH4</text>
<text x="406" y="937" font-family="Liberation Sans,sans-serif" font-size="13" fill="#00ff00" letter-spacing="-0.7">5.00V</text>
<text x="933" y="937" font-family="Liberation Sans,sans-serif" font-size="13" fill="#ff8000" letter-spacing="-0.3">Time: 1.000us</text>
</svg>
<svg class="a" width="0" height="0" style="left:0;top:0"><defs>
<linearGradient id="gFrame" x1="0" y1="0" x2="1" y2="1"><stop offset="0" stop-color="#f0f5fb"/><stop offset="0.32" stop-color="#c2d9ef"/><stop offset="0.6" stop-color="#6ea4d6"/><stop offset="1" stop-color="#3d82c0"/></linearGradient>
<linearGradient id="gBody" x1="0" y1="0" x2="0.9" y2="1"><stop offset="0" stop-color="#4a90ca"/><stop offset="0.5" stop-color="#3a82bf"/><stop offset="1" stop-color="#3580bd"/></linearGradient>
<linearGradient id="gGloss" x1="0" y1="0" x2="0.9" y2="1"><stop offset="0" stop-color="#fff" stop-opacity="0.95"/><stop offset="0.55" stop-color="#fff" stop-opacity="0.45"/><stop offset="1" stop-color="#fff" stop-opacity="0.12"/></linearGradient>
<linearGradient id="gRim" x1="0" y1="0" x2="1" y2="1"><stop offset="0" stop-color="#e4eef9"/><stop offset="0.4" stop-color="#a9cbea"/><stop offset="1" stop-color="#3d82c0"/></linearGradient>
<linearGradient id="gRimG" x1="0" y1="0" x2="1" y2="1"><stop offset="0" stop-color="#efefef"/><stop offset="0.4" stop-color="#c4c4c4"/><stop offset="1" stop-color="#808080"/></linearGradient>
<radialGradient id="gBall" cx="0.42" cy="0.4" r="0.65"><stop offset="0" stop-color="#4a90ca"/><stop offset="0.7" stop-color="#3a82bf"/><stop offset="1" stop-color="#2f74b0"/></radialGradient>
<radialGradient id="gBallG" cx="0.42" cy="0.4" r="0.65"><stop offset="0" stop-color="#7c7c7c"/><stop offset="0.7" stop-color="#676767"/><stop offset="1" stop-color="#545454"/></radialGradient>
<linearGradient id="gFold" x1="0" y1="0" x2="0" y2="1"><stop offset="0" stop-color="#dbe8f8"/><stop offset="0.45" stop-color="#a9c8ee"/><stop offset="1" stop-color="#6a9cd6"/></linearGradient>
<linearGradient id="gArr" x1="0" y1="0" x2="0" y2="1"><stop offset="0" stop-color="#cfe97a"/><stop offset="0.45" stop-color="#a5d23c"/><stop offset="0.5" stop-color="#6fb10d"/><stop offset="1" stop-color="#68ab08"/></linearGradient>
<linearGradient id="gFlop" x1="0" y1="0" x2="1" y2="0"><stop offset="0" stop-color="#86b0ea"/><stop offset="0.55" stop-color="#78a4e0"/><stop offset="1" stop-color="#5b87ca"/></linearGradient>
<filter id="fShI" x="-30%" y="-30%" width="170%" height="170%"><feGaussianBlur in="SourceAlpha" stdDeviation="1.5"/><feOffset dx="2.3" dy="2.5"/><feComponentTransfer result="o"><feFuncA type="linear" slope="1.5"/></feComponentTransfer><feFlood flood-color="#0b2f4e" flood-opacity="0.95"/><feComposite in2="o" operator="in"/><feMerge><feMergeNode/><feMergeNode in="SourceGraphic"/></feMerge></filter>
<filter id="fShG" x="-30%" y="-30%" width="170%" height="170%"><feGaussianBlur in="SourceAlpha" stdDeviation="0.8"/><feOffset dx="1" dy="1.2" result="o"/><feFlood flood-color="#333" flood-opacity="0.7"/><feComposite in2="o" operator="in"/><feMerge><feMergeNode/><feMergeNode in="SourceGraphic"/></feMerge></filter>
<pattern id="chk" width="2" height="2" patternUnits="userSpaceOnUse"><rect width="2" height="2" fill="#fff"/><rect width="1" height="1" fill="#d4d0c8"/><rect x="1" y="1" width="1" height="1" fill="#d4d0c8"/></pattern>
</defs></svg>

<div class="sep" style="left:123px"></div>
<div class="sep" style="left:246px"></div>
<div class="sep" style="left:330px"></div>
<div class="sep" style="left:414px"></div>
<div class="sep" style="left:459px"></div>
<div class="sep" style="left:582px"></div>
<svg class="a" style="left:4px;top:44px" width="40" height="40" viewBox="0 0 40 40"><path d="M5.6 10.5L6.6 6.4H16.5L17.2 8H32.4L33.2 10.5Z" fill="#f4f4f4" stroke="#8d8d8d" stroke-width="0.8"/><rect x="3.5" y="10.4" width="31" height="19" rx="1.3" fill="url(#gFold)" stroke="#7f9cc0" stroke-width="0.8"/><path d="M4.5 13.5H33.5M4.5 15.6H33.5M4.5 17.7H33.5M4.5 19.8H33.5M4.5 21.9H33.5M4.5 24H33.5M4.5 26.1H33.5" stroke="#fff" stroke-opacity="0.28" stroke-width="0.9"/><path d="M4 29.2H34" stroke="#2f64a0" stroke-width="1.3"/><path d="M11 9.8Q10.6 8.6 12 8.2Q17 6.6 21.5 7.8Q24.6 9 24.7 14V21.3H28.9L21.5 30.8L14 21.3H18.4V16.5Q18.2 11.5 11 9.8Z" fill="url(#gArr)" stroke="#4d8a0c" stroke-width="1"/><path d="M12.5 8.9Q17 7.6 20.8 8.7Q23 9.6 23.4 13.5" stroke="#e3f5a6" stroke-width="0.9" fill="none"/><path d="M15.8 22.2L21.5 29.6L27.2 22.2" stroke="#b7dc5a" stroke-width="0.7" fill="none"/></svg>
<svg class="a" style="left:44px;top:44px" width="40" height="40" viewBox="0 0 40 40"><path d="M6.6 7.5H25.6L30.5 12.4V31.4H6.6Z" fill="#dfe9f9" stroke="#2f63c0" stroke-width="1.1"/><path d="M8.1 9H25L29 13V29.9H8.1Z" fill="url(#gFlop)"/><rect x="11" y="8.3" width="13.2" height="6.6" fill="#eef3fb"/><path d="M17 14.9L24.2 8.3V14.9Z" fill="#dcecf8"/><rect x="13" y="10.1" width="1.2" height="2.8" fill="#3a6ac0"/><path d="M11 15.3H24.2" stroke="#5f8fd6" stroke-width="0.8"/><rect x="9.9" y="24" width="17.1" height="6.9" fill="#fff"/><path d="M11 25.7H26M11 27.6H26M11 29.5H26" stroke="#d4e8f4" stroke-width="0.9"/></svg>
<svg class="a" style="left:82px;top:44px" width="40" height="40" viewBox="0 0 40 40"><rect x="4.3" y="13.2" width="29.6" height="15.6" rx="2.8" fill="#f5f5f5" stroke="#6c9ad2" stroke-width="0.8"/><path d="M10 8.2Q10 7.4 11 7.4H27.6Q28.5 7.4 28.5 8.2V15H10Z" fill="#2c6fba"/><rect x="11.7" y="4.2" width="15.2" height="9.6" fill="#f4f4f4" stroke="#6c9ad2" stroke-width="0.7"/><ellipse cx="19.4" cy="16.3" rx="9.5" ry="3.6" fill="#1f6bb8"/><ellipse cx="19.4" cy="17" rx="6.2" ry="1.2" fill="#6f97d4"/><path d="M10.7 26.2V24Q10.7 22.3 12.4 22.3H26.8Q28.5 22.3 28.5 24V26.2L26 24.8H13.2Z" fill="#1e1e1e"/><path d="M14 24.4H25.2L27.4 32.6H11.9Z" fill="#fbfbfb" stroke="#6c9ad2" stroke-width="0.6"/><path d="M14 24.6H25.2L25.6 26.4H13.6Z" fill="#dcdcdc"/><path d="M12.6 25L10.6 31M26.4 25L28.4 31" stroke="#2c6fc0" stroke-width="2"/></svg>
<svg class="a" style="left:129px;top:47px" width="33" height="33" viewBox="-1 -1 33 33"><rect x="0" y="-1" width="31" height="31" rx="3.6" fill="url(#gFrame)"/><rect x="2.7" y="2" width="27.8" height="27.6" rx="2" fill="url(#gBody)"/><path d="M2.7 4Q2.7 2 4.7 2H26.5Q28.8 2 29.6 3.6L23 4.4Q18 5.5 15 14.6L2.7 9.4Z" fill="url(#gGloss)"/><g filter="url(#fShI)"><text x="0" y="0" transform="translate(15.4 23.2) scale(1.1 1)" text-anchor="middle" font-family="Liberation Sans,sans-serif" font-weight="bold" font-size="22.6" fill="#fff" stroke="#fff" stroke-width="1.3" stroke-linejoin="miter">H</text></g></svg>
<svg class="a" style="left:169px;top:47px" width="33" height="33" viewBox="-1 -1 33 33"><rect x="0" y="-1" width="31" height="31" rx="3.6" fill="url(#gFrame)"/><rect x="2.7" y="2" width="27.8" height="27.6" rx="2" fill="url(#gBody)"/><path d="M2.7 4Q2.7 2 4.7 2H26.5Q28.8 2 29.6 3.6L23 4.4Q18 5.5 15 14.6L2.7 9.4Z" fill="url(#gGloss)"/><g filter="url(#fShI)"><text x="0" y="0" transform="translate(15 23.2) scale(1.1 1)" text-anchor="middle" font-family="Liberation Sans,sans-serif" font-weight="bold" font-size="22.6" fill="#fff" stroke="#fff" stroke-width="1.3" stroke-linejoin="miter">V</text></g></svg>
<svg class="a" style="left:208px;top:47px" width="33" height="33" viewBox="-1 -1 33 33"><rect x="0" y="-1" width="31" height="31" rx="3.6" fill="url(#gFrame)"/><rect x="2.7" y="2" width="27.8" height="27.6" rx="2" fill="url(#gBody)"/><path d="M2.7 4Q2.7 2 4.7 2H26.5Q28.8 2 29.6 3.6L23 4.4Q18 5.5 15 14.6L2.7 9.4Z" fill="url(#gGloss)"/><g filter="url(#fShI)"><text x="0" y="0" transform="translate(15 23.2) scale(1.1 1)" text-anchor="middle" font-family="Liberation Sans,sans-serif" font-weight="bold" font-size="22.6" fill="#fff" stroke="#fff" stroke-width="1.3" stroke-linejoin="miter">T</text></g></svg>
<svg class="a" style="left:250px;top:44px" width="39" height="39"><rect width="39" height="39" fill="url(#chk)"/><path d="M0.5 39V0.5H39" stroke="#808080" fill="none"/><path d="M38.5 0V38.5H0" stroke="#fff" fill="none"/></svg>
<svg class="a" style="left:254px;top:47px" width="33" height="33" viewBox="-1 -1 33 33"><rect x="0" y="-1" width="31" height="31" rx="3.6" fill="url(#gFrame)"/><rect x="2.7" y="2" width="27.8" height="27.6" rx="2" fill="url(#gBody)"/><path d="M2.7 4Q2.7 2 4.7 2H26.5Q28.8 2 29.6 3.6L23 4.4Q18 5.5 15 14.6L2.7 9.4Z" fill="url(#gGloss)"/><g filter="url(#fShI)"><path d="M3 23.7H10.4V7.6H19.75V23.7H26.9" stroke="#fff" stroke-width="2.6" fill="none"/></g></svg>
<svg class="a" style="left:292px;top:47px" width="33" height="33" viewBox="-1 -1 33 33"><rect x="0" y="-1" width="31" height="31" rx="3.6" fill="url(#gFrame)"/><rect x="2.7" y="2" width="27.8" height="27.6" rx="2" fill="url(#gBody)"/><path d="M2.7 4Q2.7 2 4.7 2H26.5Q28.8 2 29.6 3.6L23 4.4Q18 5.5 15 14.6L2.7 9.4Z" fill="url(#gGloss)"/><g filter="url(#fShI)"><path d="M4.2 23.75H12M18.1 23.75H26.2M9.1 7.2H20.7" stroke="#fff" stroke-width="2.3" fill="none"/><path d="M10.55 10.4V20.8M19.55 10.4V20.8" stroke="#fff" stroke-width="2.9" stroke-dasharray="2.3 1.7" fill="none"/></g></svg>
<svg class="a" style="left:337px;top:47px" width="33" height="33" viewBox="-1 -1 33 33"><rect x="0" y="-1" width="31" height="31" rx="3.6" fill="url(#gFrame)"/><rect x="2.7" y="2" width="27.8" height="27.6" rx="2" fill="url(#gBody)"/><path d="M2.7 4Q2.7 2 4.7 2H26.5Q28.8 2 29.6 3.6L23 4.4Q18 5.5 15 14.6L2.7 9.4Z" fill="url(#gGloss)"/><g filter="url(#fShI)"><path d="M5.6 10.35H13.8M9.7 6.3V14.4M18 10.35H25.8M6.3 17.6L12.4 23.8M12.4 17.6L6.3 23.8M16.8 20.7H25.8" stroke="#fff" stroke-width="2.5" fill="none"/><circle cx="21.3" cy="17.3" r="1.45" fill="#fff"/><circle cx="21.3" cy="24" r="1.45" fill="#fff"/></g></svg>
<svg class="a" style="left:376px;top:47px" width="33" height="33" viewBox="-1 -1 33 33"><rect x="0" y="-1" width="31" height="31" rx="3.6" fill="url(#gFrame)"/><rect x="2.7" y="2" width="27.8" height="27.6" rx="2" fill="url(#gBody)"/><path d="M2.7 4Q2.7 2 4.7 2H26.5Q28.8 2 29.6 3.6L23 4.4Q18 5.5 15 14.6L2.7 9.4Z" fill="url(#gGloss)"/><g filter="url(#fShI)"><text x="0" y="0" transform="translate(14.8 23.6) scale(1.08 1)" text-anchor="middle" font-family="Liberation Sans,sans-serif" font-weight="bold" font-size="23.6" fill="#fff" stroke="#fff" stroke-width="1.3" stroke-linejoin="miter">R</text></g></svg>
<svg class="a" style="left:421px;top:47px" width="33" height="33" viewBox="-1 -1 33 33"><rect x="0" y="-1" width="31" height="31" rx="3.6" fill="url(#gFrame)"/><rect x="2.7" y="2" width="27.8" height="27.6" rx="2" fill="url(#gBody)"/><path d="M2.7 4Q2.7 2 4.7 2H26.5Q28.8 2 29.6 3.6L23 4.4Q18 5.5 15 14.6L2.7 9.4Z" fill="url(#gGloss)"/><g filter="url(#fShI)"><path d="M4.6 7.6H21M8.7 4.4V21.6" stroke="#c3daf1" stroke-width="1.2" fill="none"/><rect x="7.2" y="3.4" width="3" height="1.8" rx="0.8" fill="none" stroke="#c3daf1" stroke-width="0.9"/><rect x="7.2" y="21.2" width="3" height="1.9" rx="0.8" fill="none" stroke="#c3daf1" stroke-width="0.9"/><rect x="3.2" y="6.4" width="1.8" height="2.4" rx="0.8" fill="none" stroke="#c3daf1" stroke-width="0.9"/><rect x="20.8" y="6.2" width="1.8" height="2.8" rx="0.8" fill="none" stroke="#c3daf1" stroke-width="0.9"/><path d="M11.6 12.8L23.6 13.2L19.9 16.7L25.6 22.3Q26.4 23.8 25 25.2Q23.6 26.3 22.3 25.4L16.6 19.9L12.6 23.8Z" fill="#fff"/></g></svg>
<svg class="a" style="left:467px;top:48px" width="32" height="32" viewBox="0 0 32 32"><circle cx="15" cy="15" r="15" fill="url(#gRim)"/><circle cx="15.5" cy="15.6" r="13.3" fill="url(#gBall)"/><path d="M2.3 11.2A13.3 13.3 0 0 1 23.6 5.2Q18 6.5 14.5 14.2Z" fill="#fff" fill-opacity="0.55"/><g filter="url(#fShI)"><text transform="translate(15.6 13.5) scale(1.2 1)" text-anchor="middle" font-family="Liberation Sans,sans-serif" font-weight="bold" font-size="8.9" fill="#fff" stroke="#fff" stroke-width="0.45">AU</text><text transform="translate(16.1 22.6) scale(1.2 1)" text-anchor="middle" font-family="Liberation Sans,sans-serif" font-weight="bold" font-size="8.9" fill="#fff" stroke="#fff" stroke-width="0.45">TO</text></g></svg>
<svg class="a" style="left:502px;top:44px" width="39" height="39"><rect width="39" height="39" fill="url(#chk)"/><path d="M0.5 39V0.5H39" stroke="#808080" fill="none"/><path d="M38.5 0V38.5H0" stroke="#fff" fill="none"/></svg>
<svg class="a" style="left:507px;top:48px" width="32" height="32" viewBox="0 0 32 32"><circle cx="15" cy="15" r="15" fill="url(#gRim)"/><circle cx="15.5" cy="15.6" r="13.3" fill="url(#gBall)"/><path d="M2.3 11.2A13.3 13.3 0 0 1 23.6 5.2Q18 6.5 14.5 14.2Z" fill="#fff" fill-opacity="0.55"/><g filter="url(#fShI)"><path d="M11.9 9.3L22.6 15.5L11.9 21.8Z" fill="#fff"/></g></svg>
<svg class="a" style="left:545px;top:48px" width="32" height="32" viewBox="0 0 32 32"><circle cx="15" cy="15" r="15" fill="url(#gRim)"/><circle cx="15.5" cy="15.6" r="13.3" fill="url(#gBall)"/><path d="M2.3 11.2A13.3 13.3 0 0 1 23.6 5.2Q18 6.5 14.5 14.2Z" fill="#fff" fill-opacity="0.55"/><g filter="url(#fShI)"><rect x="9.75" y="8.7" width="3.95" height="12" fill="#fff"/><rect x="15.9" y="8.7" width="3.75" height="12" fill="#fff"/></g></svg>
<svg class="a" style="left:589px;top:50px" width="34" height="34" viewBox="0 0 34 34"><circle cx="20.4" cy="10.9" r="9.15" fill="#e6e6e6" stroke="#666" stroke-width="3.3"/><path d="M16 10.9H24.8" stroke="#666" stroke-width="2.2"/><path d="M20.4 6.5V15.3" stroke="#666" stroke-width="2.2"/><path d="M13.2 17.6L3.6 23.6" stroke="#666" stroke-width="3.8" stroke-linecap="round"/></svg>
<svg class="a" style="left:628px;top:50px" width="34" height="34" viewBox="0 0 34 34"><circle cx="20.4" cy="10.9" r="9.15" fill="#e6e6e6" stroke="#666" stroke-width="3.3"/><path d="M16 10.9H24.8" stroke="#666" stroke-width="2.2"/><path d="M13.2 17.6L3.6 23.6" stroke="#666" stroke-width="3.8" stroke-linecap="round"/></svg>
<svg class="a" style="left:668px;top:48px" width="32" height="32" viewBox="0 0 32 32"><circle cx="15" cy="15" r="15" fill="url(#gRimG)"/><circle cx="15.5" cy="15.6" r="13.3" fill="url(#gBallG)"/><path d="M2.3 11.2A13.3 13.3 0 0 1 23.6 5.2Q18 6.5 14.5 14.2Z" fill="#fff" fill-opacity="0.55"/><g filter="url(#fShG)"><path d="M6.5 11.6L11.5 7.6V10H24.6L22.8 13.2H11.5V15.6Z" stroke="#e4e4e4" stroke-width="1" fill="#8a8a8a" fill-opacity="0.5"/><path d="M26.2 17.6L21 12.6V15.6H9.8L8 19.6H21V22.8Z" stroke="#e4e4e4" stroke-width="1" fill="#8a8a8a" fill-opacity="0.6"/></g></svg>
<div class="a" style="left:4px;top:83px;width:1232px;height:1px;background:#808080"></div>
<div class="a" style="left:1045px;top:84px;width:191px;height:1px;background:#fff"></div>
<div class="t" style="left:1055px;top:92px">Connect:</div>
<div class="t" style="left:1163px;top:92px;letter-spacing:-0.8px">DDS:</div>
<svg class="a" style="left:1100px;top:87px" width="112" height="24"><circle cx="12" cy="12" r="9.8" fill="#ff8000" stroke="#000" stroke-width="1"/><circle cx="100" cy="12" r="9.8" fill="#ff0000" stroke="#000" stroke-width="1"/></svg>
<div class="a" style="left:1045px;top:132px;width:191px;height:1px;background:#fff"></div>
<div class="a" style="left:1089px;top:114px;width:41px;height:18px;border:1px solid;border-color:#fff #404040 transparent #fff;border-radius:2px 2px 0 0;box-shadow:inset -1px 0 0 #808080"></div>
<div class="a" style="left:1045px;top:111px;width:45px;height:23px;background:#d4d0c8;border:1px solid;border-color:#fff #404040 transparent #fff;border-bottom:0;border-radius:2px 2px 0 0;box-shadow:inset -1px 0 0 #808080"></div>
<div class="t" style="left:1052px;top:114px">DSO</div>
<div class="t" style="left:1094px;top:116px">DDS</div>
<div class="grp" style="left:1050px;top:144px;width:167px;height:110px"><b>Horizontal</b></div>
<div class="t" style="left:1053px;top:158px">Time / DIV</div>
<div class="sunk" style="left:1053px;top:177px;width:68px;height:22px"><span>1.000us</span><div class="cb"></div></div>
<div class="t" style="left:1053px;top:205px">Format</div>
<div class="sunk" style="left:1053px;top:226px;width:68px;height:22px"><span>Y - T</span><div class="cb"></div></div>
<svg class="a" style="left:1126px;top:169px" width="84" height="84" viewBox="-42 -42 84 84"><g transform="translate(0.40 -0.40) scale(1 0.972)"><path d="M-24.5 24.5L-31.5 31M24 24.5L31.5 31" stroke="#000" stroke-width="1.3" fill="none"/><path d="M-28.30 24.60A37.5 37.5 0 1 1 28.30 24.60" stroke="#000" stroke-width="0.85" fill="#f4f0e8"/><path d="M-27.67 22.40A35.6 35.6 0 1 1 27.67 22.40" stroke="#000" stroke-width="0.85" fill="none"/><circle r="33.8" fill="#d9d9d9"/><path d="M25.12 -22.62A33.8 33.8 0 0 1 -24.72 23.05L0 0Z" fill="#b8b8b8"/><circle r="33.7" fill="none" stroke="#000" stroke-width="0.85"/><circle r="28.4" fill="#0000c8" stroke="#000" stroke-width="0.8"/><path d="M5.8 -0.6H23.6" stroke="#ffffd8" stroke-width="2"/></g></svg>
<div class="grp" style="left:1050px;top:268px;width:167px;height:126px"><b>Vertical</b></div>
<div class="sunk" style="left:1053px;top:285px;width:68px;height:22px"><span>CH1</span><div class="cb"></div></div>
<div class="sunk g" style="left:1053px;top:313px;width:68px;height:21px"><span style="left:6px;top:2px">20.0V</span><div class="sp u" style="top:2px;height:8px"></div><div class="sp dn" style="top:10px;height:9px"></div></div>
<div class="sunk" style="left:1053px;top:340px;width:68px;height:22px"><span>DC</span><div class="cb"></div></div>
<div class="sunk" style="left:1053px;top:368px;width:68px;height:22px"><span>x10</span><div class="cb"></div></div>
<div class="sunk" style="left:1140px;top:289px;width:13px;height:13px"><svg class="a" style="left:1px;top:1px" width="9" height="9" viewBox="0 0 9 9"><path d="M1 3.5L3.5 6L8 1.5" stroke="#000" stroke-width="1.8" fill="none"/></svg></div>
<div class="t" style="left:1158px;top:289px;letter-spacing:-0.6px">ON/OFF</div>
<svg class="a" style="left:1126px;top:311px" width="84" height="84" viewBox="-42 -42 84 84"><g transform="translate(0.50 -0.20) scale(1 0.972)"><path d="M-24.5 24.5L-31.5 31M24 24.5L31.5 31" stroke="#000" stroke-width="1.3" fill="none"/><path d="M-28.30 24.60A37.5 37.5 0 1 1 28.30 24.60" stroke="#000" stroke-width="0.85" fill="#f4f0e8"/><path d="M-27.67 22.40A35.6 35.6 0 1 1 27.67 22.40" stroke="#000" stroke-width="0.85" fill="none"/><circle r="33.8" fill="#d9d9d9"/><path d="M25.12 -22.62A33.8 33.8 0 0 1 -24.72 23.05L0 0Z" fill="#b8b8b8"/><circle r="33.7" fill="none" stroke="#000" stroke-width="0.85"/><circle r="28.4" fill="#ffff00" stroke="#000" stroke-width="0.8"/><path d="M-23.3 2.6L-15.5 2.2L-15 1.2L-7.3 0.4" stroke="#dcdcd4" stroke-width="1.7" fill="none"/></g></svg>
<div class="grp" style="left:1050px;top:410px;width:167px;height:201px"><b>Trigger</b></div>
<div class="t" style="left:1053px;top:429px">Trigger Mode</div>
<div class="sunk" style="left:1140px;top:425px;width:68px;height:22px"><span>Edge</span><div class="cb"></div></div>
<div class="t" style="left:1053px;top:459px">Trigger Sweep</div>
<div class="sunk" style="left:1140px;top:455px;width:68px;height:22px"><span>AUTO</span><div class="cb"></div></div>
<div class="t" style="left:1053px;top:489px">Trigger Source</div>
<div class="sunk" style="left:1140px;top:485px;width:68px;height:22px"><span>CH1</span><div class="cb"></div></div>
<div class="t" style="left:1053px;top:519px">Trigger Slope</div>
<div class="sunk" style="left:1140px;top:515px;width:68px;height:22px"><span>+</span><div class="cb"></div></div>
<div class="grp" style="left:1050px;top:627px;width:167px;height:118px"><b>Move Waveform</b></div>
<div class="t dis" style="left:1052px;top:644px">Length :</div>
<div class="a" style="left:1143px;top:642px;width:68px;height:19px;border:1px solid;border-color:#808080 #fff #fff #808080"></div>
<div class="t dis" style="left:1161px;top:645px">10240</div>
<div class="t dis" style="left:1052px;top:676px">Step</div>
<div class="sunk g" style="left:1143px;top:674px;width:68px;height:21px"><span class="dis" style="left:15px;top:2px">1000</span><div class="sp u gd" style="top:2px;height:8px"></div><div class="sp dn gd" style="top:10px;height:9px"></div></div>
<div class="btn" style="left:1060px;top:711px;width:30px;height:21px"><span class="dis" style="top:4px;font-size:11px">|&lt;</span></div>
<div class="sunk g" style="left:1092px;top:711px;width:83px;height:21px"><span class="dis" style="left:21px;top:2px">5119</span><div class="sp u gd" style="top:2px;height:8px"></div><div class="sp dn gd" style="top:10px;height:9px"></div></div>
<div class="btn" style="left:1177px;top:711px;width:30px;height:21px"><span class="dis" style="top:4px;font-size:11px">&gt;|</span></div>
<div class="grp" style="left:1050px;top:758px;width:167px;height:200px"><b>Recorder</b></div>
<div class="t" style="left:1059px;top:775px">Path :</div>
<div class="sunk" style="left:1053px;top:791px;width:140px;height:20px"><span style="top:2px;left:5px">C:\data.drc</span></div>
<div class="btn" style="left:1194px;top:791px;width:22px;height:21px"><span style="top:3px">...</span></div>
<svg class="a" style="left:1059.0px;top:829.5px" width="14" height="14" viewBox="-7 -7 14 14"><circle r="5.6" fill="#fff"/><path d="M-4.2 4.2A5.9 5.9 0 0 1 4.2 -4.2" stroke="#808080" stroke-width="1.1" fill="none"/><path d="M-3.5 3.5A4.9 4.9 0 0 1 3.5 -3.5" stroke="#404040" stroke-width="1" fill="none"/><path d="M4.2 -4.2A5.9 5.9 0 0 1 -4.2 4.2" stroke="#fff" stroke-width="1.1" fill="none"/><path d="M3.5 -3.5A4.9 4.9 0 0 1 -3.5 3.5" stroke="#d4d0c8" stroke-width="1" fill="none"/><circle r="2" fill="#000"/></svg>
<div class="t" style="left:1077px;top:830px">Storage</div>
<svg class="a" style="left:1134.5px;top:829.5px" width="14" height="14" viewBox="-7 -7 14 14"><circle r="5.6" fill="#fff"/><path d="M-4.2 4.2A5.9 5.9 0 0 1 4.2 -4.2" stroke="#808080" stroke-width="1.1" fill="none"/><path d="M-3.5 3.5A4.9 4.9 0 0 1 3.5 -3.5" stroke="#404040" stroke-width="1" fill="none"/><path d="M4.2 -4.2A5.9 5.9 0 0 1 -4.2 4.2" stroke="#fff" stroke-width="1.1" fill="none"/><path d="M3.5 -3.5A4.9 4.9 0 0 1 -3.5 3.5" stroke="#d4d0c8" stroke-width="1" fill="none"/></svg>
<div class="t" style="left:1153px;top:830px">Play Back</div>
<div class="t" style="left:1065px;top:868px">Interval(S)</div>
<div class="sunk g" style="left:1131px;top:865px;width:79px;height:22px"><span class="dis">Fastest</span><div class="cb d"></div></div>
<div class="btn" style="left:1062px;top:901px;width:60px;height:26px"><span style="top:6px">Start</span></div>
<div class="btn" style="left:1146px;top:901px;width:60px;height:26px"><span class="dis" style="top:6px">Stop</span></div>
<div class="a" style="left:2px;top:947px;width:1236px;height:20px;background:#d4d0c8"></div>
<div class="a" style="left:636px;top:949px;width:473px;height:16px;border:1px solid;border-color:#808080 #fff #fff #808080"></div>
<div class="tm" style="left:5px;top:951px">Connected</div>
<div class="tm" style="left:1114px;top:951px">25-05-2014&nbsp; 19:03</div>
<svg class="a" style="left:1222px;top:951px" width="14" height="14" viewBox="0 0 14 14"><path d="M13 1L1 13M13 5L5 13M13 9L9 13" stroke="#808080" stroke-width="1.6"/><path d="M13 0L0 13M13 4L4 13M13 8L8 13" stroke="#fff" stroke-width="1"/></svg>
</body></html>
